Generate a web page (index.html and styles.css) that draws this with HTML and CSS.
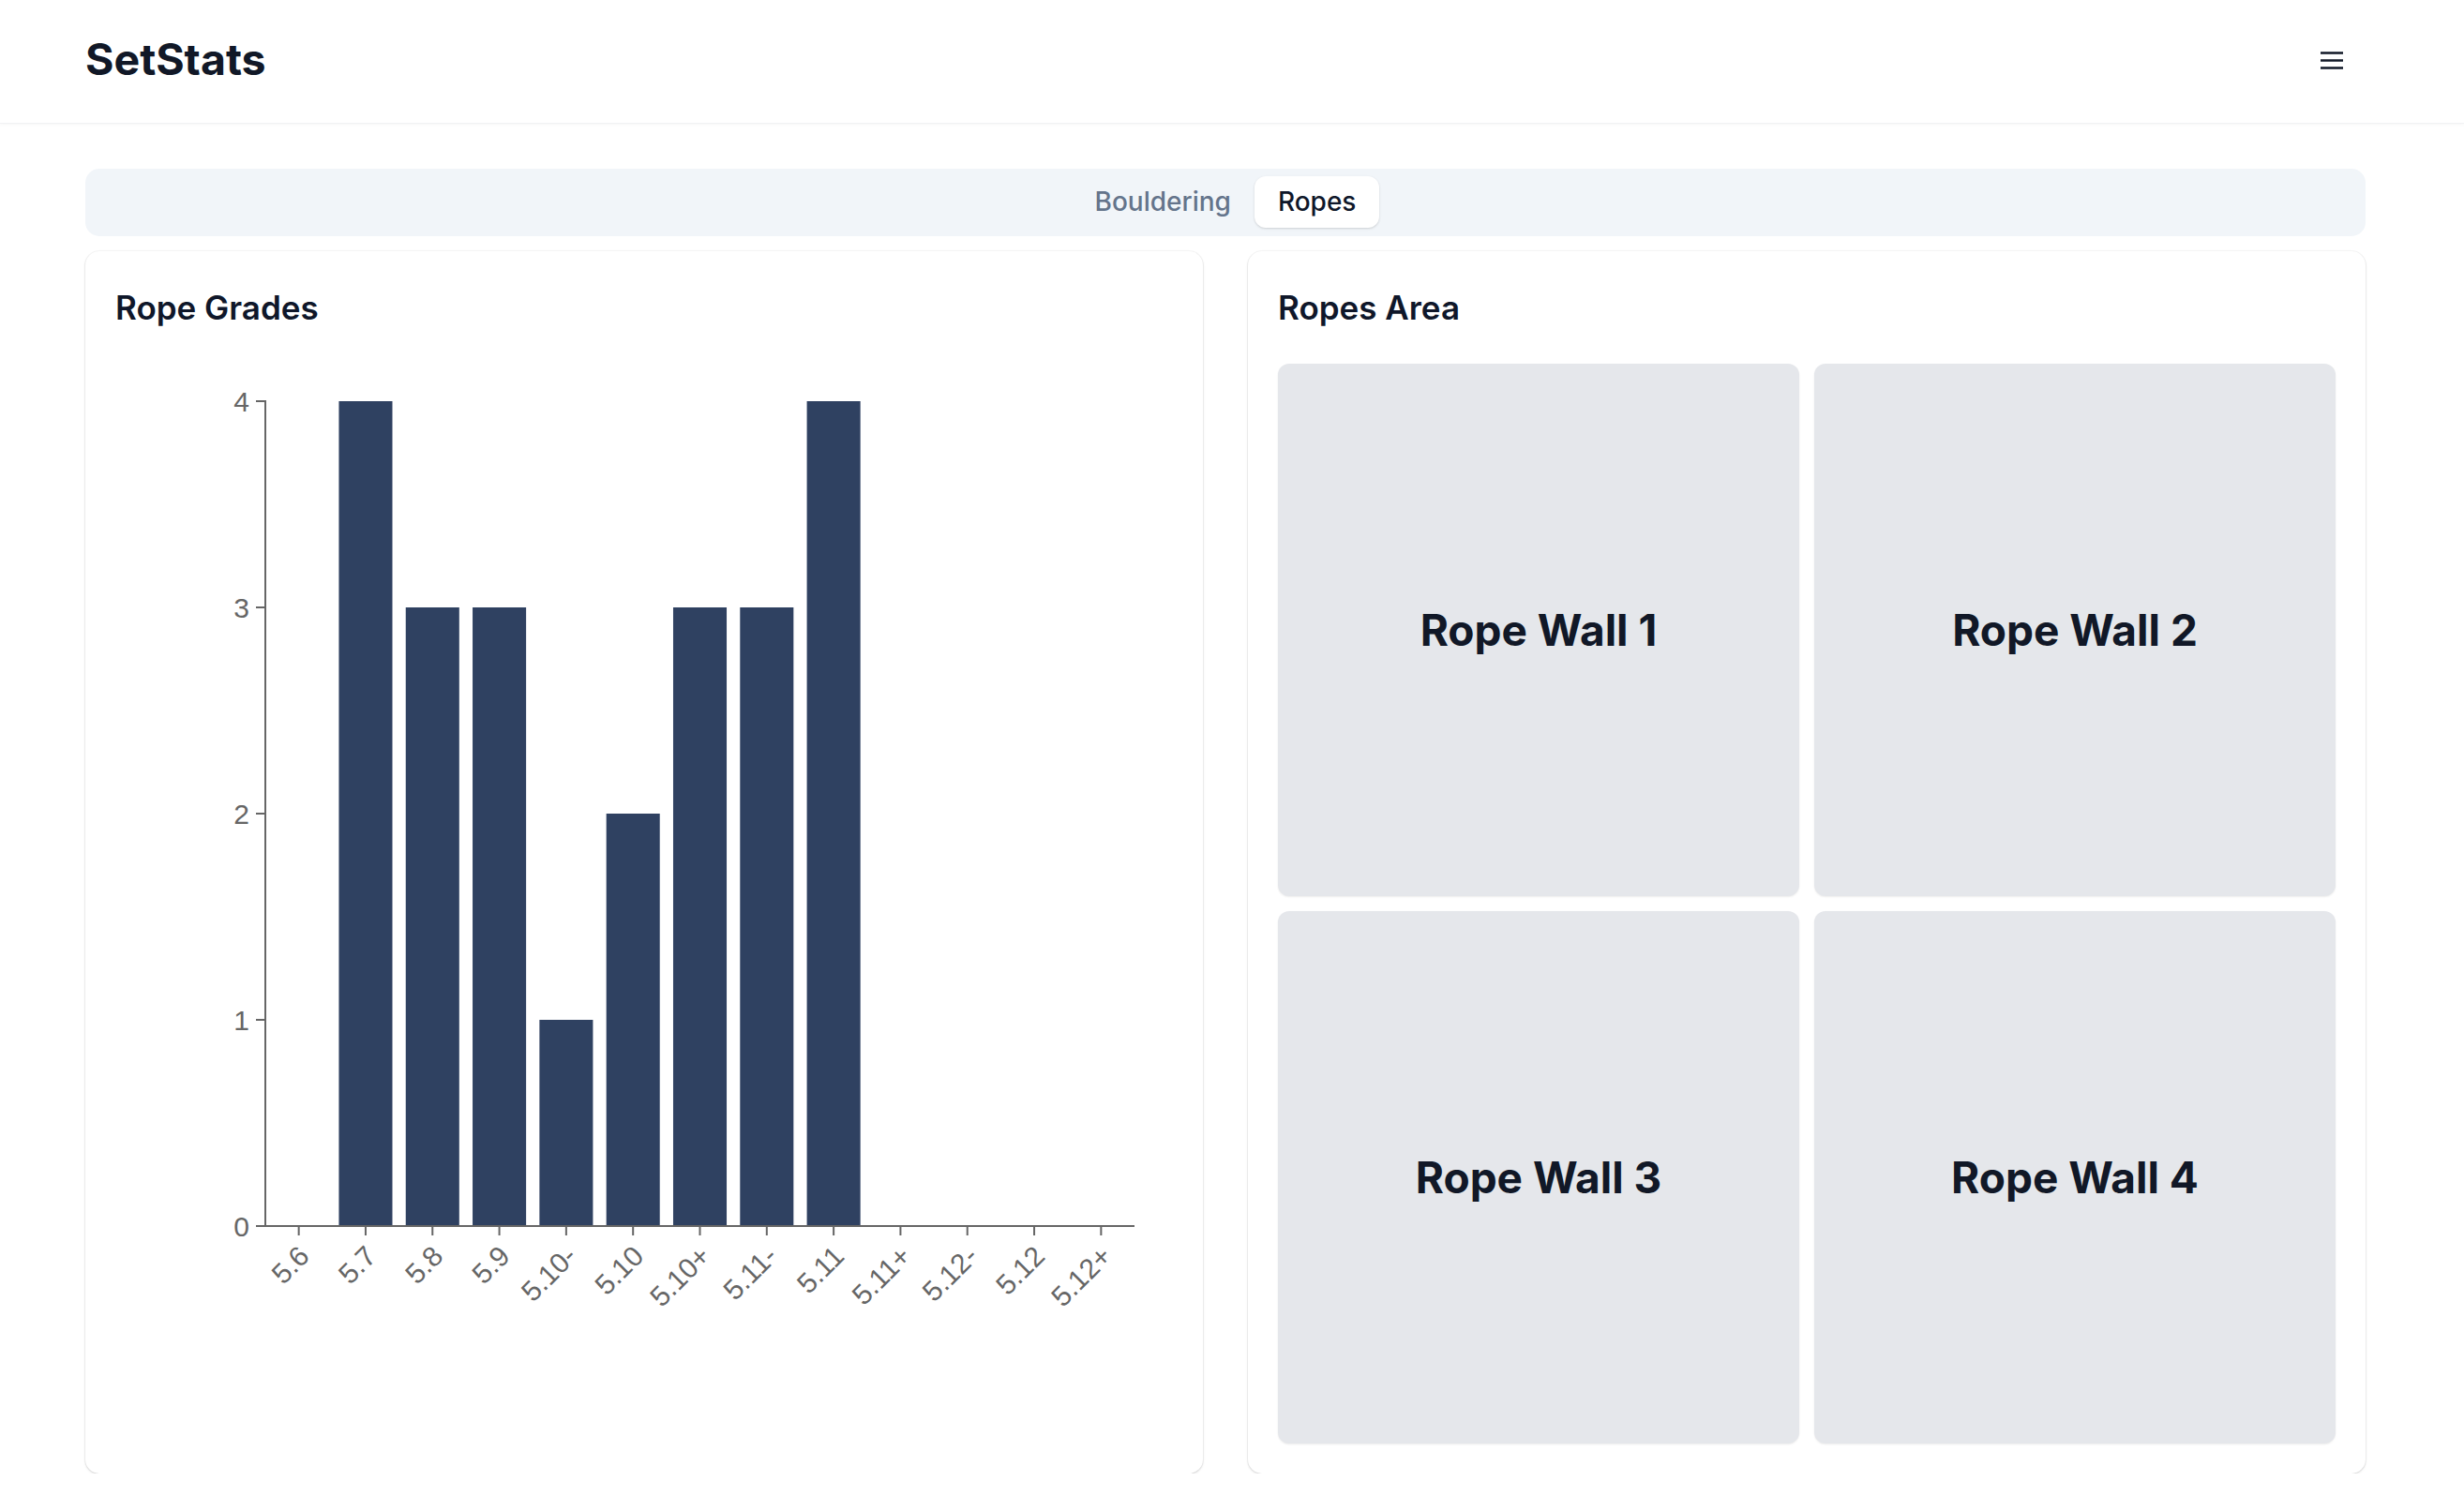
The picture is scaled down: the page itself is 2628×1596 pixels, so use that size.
FILE: index.html
```html
<!DOCTYPE html>
<html lang="en">
<head>
<meta charset="utf-8">
<title>SetStats</title>
<link rel="stylesheet" href="styles.css">
</head>
<body>
<header class="topbar">
  <div class="topbar-inner">
    <div class="logo">SetStats</div>
    <button class="menu-btn" aria-label="Menu">
      <svg width="24" height="24" viewBox="0 0 24 24"><path d="M0 3.5H24M0 11.5H24M0 19.5H24" stroke="#111827" stroke-width="2.4" fill="none"/></svg>
    </button>
  </div>
</header>
<main class="page">
  <div class="tabs">
    <button class="tab">Bouldering</button>
    <button class="tab active">Ropes</button>
  </div>
  <div class="grid">
    <section class="card">
      <h2 class="card-title">Rope Grades</h2>
      <svg class="chart" width="1128" height="1152" viewBox="0 0 1128 1152">
        <g class="bars">
          <rect x="238.44" y="40" width="57.05" height="880"/>
          <rect x="309.75" y="260" width="57.05" height="660"/>
          <rect x="381.05" y="260" width="57.05" height="660"/>
          <rect x="452.36" y="700" width="57.05" height="220"/>
          <rect x="523.67" y="480" width="57.05" height="440"/>
          <rect x="594.98" y="260" width="57.05" height="660"/>
          <rect x="666.29" y="260" width="57.05" height="660"/>
          <rect x="737.59" y="40" width="57.05" height="880"/>
        </g>
        <g class="axis">
          <path d="M150,920H160V40H150"/>
          <path d="M150,700H160M150,480H160M150,260H160"/>
          <path d="M160,920H1087"/>
          <path d="M195.65,920V930M266.96,920V930M338.27,920V930M409.57,920V930M480.88,920V930M552.19,920V930M623.5,920V930M694.81,920V930M766.11,920V930M837.42,920V930M908.73,920V930M980.04,920V930M1051.35,920V930"/>
        </g>
        <g class="ylabels">
          <text x="143" y="930.5">0</text>
          <text x="143" y="710.5">1</text>
          <text x="143" y="490.5">2</text>
          <text x="143" y="270.5">3</text>
          <text x="143" y="50.5">4</text>
        </g>
        <g class="xlabels">
          <text x="208.65" y="954" transform="rotate(-45 208.65 954)">5.6</text>
          <text x="279.96" y="954" transform="rotate(-45 279.96 954)">5.7</text>
          <text x="351.27" y="954" transform="rotate(-45 351.27 954)">5.8</text>
          <text x="422.57" y="954" transform="rotate(-45 422.57 954)">5.9</text>
          <text x="493.88" y="954" transform="rotate(-45 493.88 954)">5.10-</text>
          <text x="565.19" y="954" transform="rotate(-45 565.19 954)">5.10</text>
          <text x="636.5" y="954" transform="rotate(-45 636.5 954)">5.10+</text>
          <text x="707.81" y="954" transform="rotate(-45 707.81 954)">5.11-</text>
          <text x="779.11" y="954" transform="rotate(-45 779.11 954)">5.11</text>
          <text x="850.42" y="954" transform="rotate(-45 850.42 954)">5.11+</text>
          <text x="921.73" y="954" transform="rotate(-45 921.73 954)">5.12-</text>
          <text x="993.04" y="954" transform="rotate(-45 993.04 954)">5.12</text>
          <text x="1064.35" y="954" transform="rotate(-45 1064.35 954)">5.12+</text>
        </g>
      </svg>
    </section>
    <section class="card">
      <h2 class="card-title">Ropes Area</h2>
      <div class="walls">
        <div class="wall">Rope Wall 1</div>
        <div class="wall">Rope Wall 2</div>
        <div class="wall">Rope Wall 3</div>
        <div class="wall">Rope Wall 4</div>
      </div>
    </section>
  </div>
</main>
</body>
</html>
```

FILE: styles.css
```css
* { box-sizing: border-box; }

body {
  margin: 0;
  background: #ffffff;
  font-family: Inter, "Noto Sans", sans-serif;
  color: #111827;
}

.topbar {
  height: 132px;
  background: #ffffff;
  border-bottom: 1px solid #f1f2f4;
  box-shadow: 0 1px 3px rgba(0, 0, 0, 0.04);
}

.topbar-inner {
  height: 100%;
  display: flex;
  align-items: center;
  justify-content: space-between;
  padding: 0 105px 4px 91px;
}

.logo {
  font-size: 46.5px;
  font-weight: 700;
  color: #111827;
  line-height: 1;
}

.menu-btn {
  background: none;
  border: 0;
  padding: 2px 24px 0 0;
  display: flex;
  cursor: pointer;
}

.menu-btn svg { display: block; }

.page {
  padding: 48px 105px 0 91px;
}

.tabs {
  height: 72px;
  background: #f1f5f9;
  border-radius: 15px;
  padding: 8px;
  display: flex;
  justify-content: center;
  align-items: flex-start;
}

.tab {
  font-family: Inter, "Noto Sans", sans-serif;
  font-size: 28px;
  font-weight: 500;
  height: 55px;
  line-height: 55px;
  padding: 0 25px;
  border: 0;
  border-radius: 12px;
  background: transparent;
  color: #64748b;
  cursor: pointer;
}

.tab.active {
  background: #ffffff;
  color: #0f172a;
  box-shadow: 0 1px 3px rgba(0, 0, 0, 0.1), 0 1px 2px rgba(0, 0, 0, 0.06);
}

.grid {
  margin-top: 16px;
  display: grid;
  grid-template-columns: 1fr 1fr;
  gap: 48px;
}

.card {
  background: #ffffff;
  border-radius: 15px;
  padding: 32px;
  box-shadow: 0 0 0 1px rgba(0, 0, 0, 0.03), 0 1px 3px rgba(0, 0, 0, 0.1), 0 1px 2px rgba(0, 0, 0, 0.06);
}

.card-title {
  margin: 0 0 32px;
  font-size: 35px;
  line-height: 56px;
  font-weight: 600;
  color: #0f172a;
}

.chart {
  display: block;
}

.chart .bars rect {
  fill: #2f4161;
}

.chart .axis path {
  fill: none;
  stroke: #666666;
  stroke-width: 2;
}

.chart text {
  font-family: "Liberation Sans", Arial, sans-serif;
  font-size: 30px;
  fill: #666666;
  text-anchor: end;
}

.walls {
  display: grid;
  grid-template-columns: 1fr 1fr;
  grid-template-rows: 568px 568px;
  gap: 16px;
}

.wall {
  background: #e5e7eb;
  border-radius: 12px;
  display: flex;
  align-items: center;
  justify-content: center;
  font-size: 46px;
  font-weight: 700;
  color: #111827;
  box-shadow: 0 1px 2px rgba(0, 0, 0, 0.08);
}
```
